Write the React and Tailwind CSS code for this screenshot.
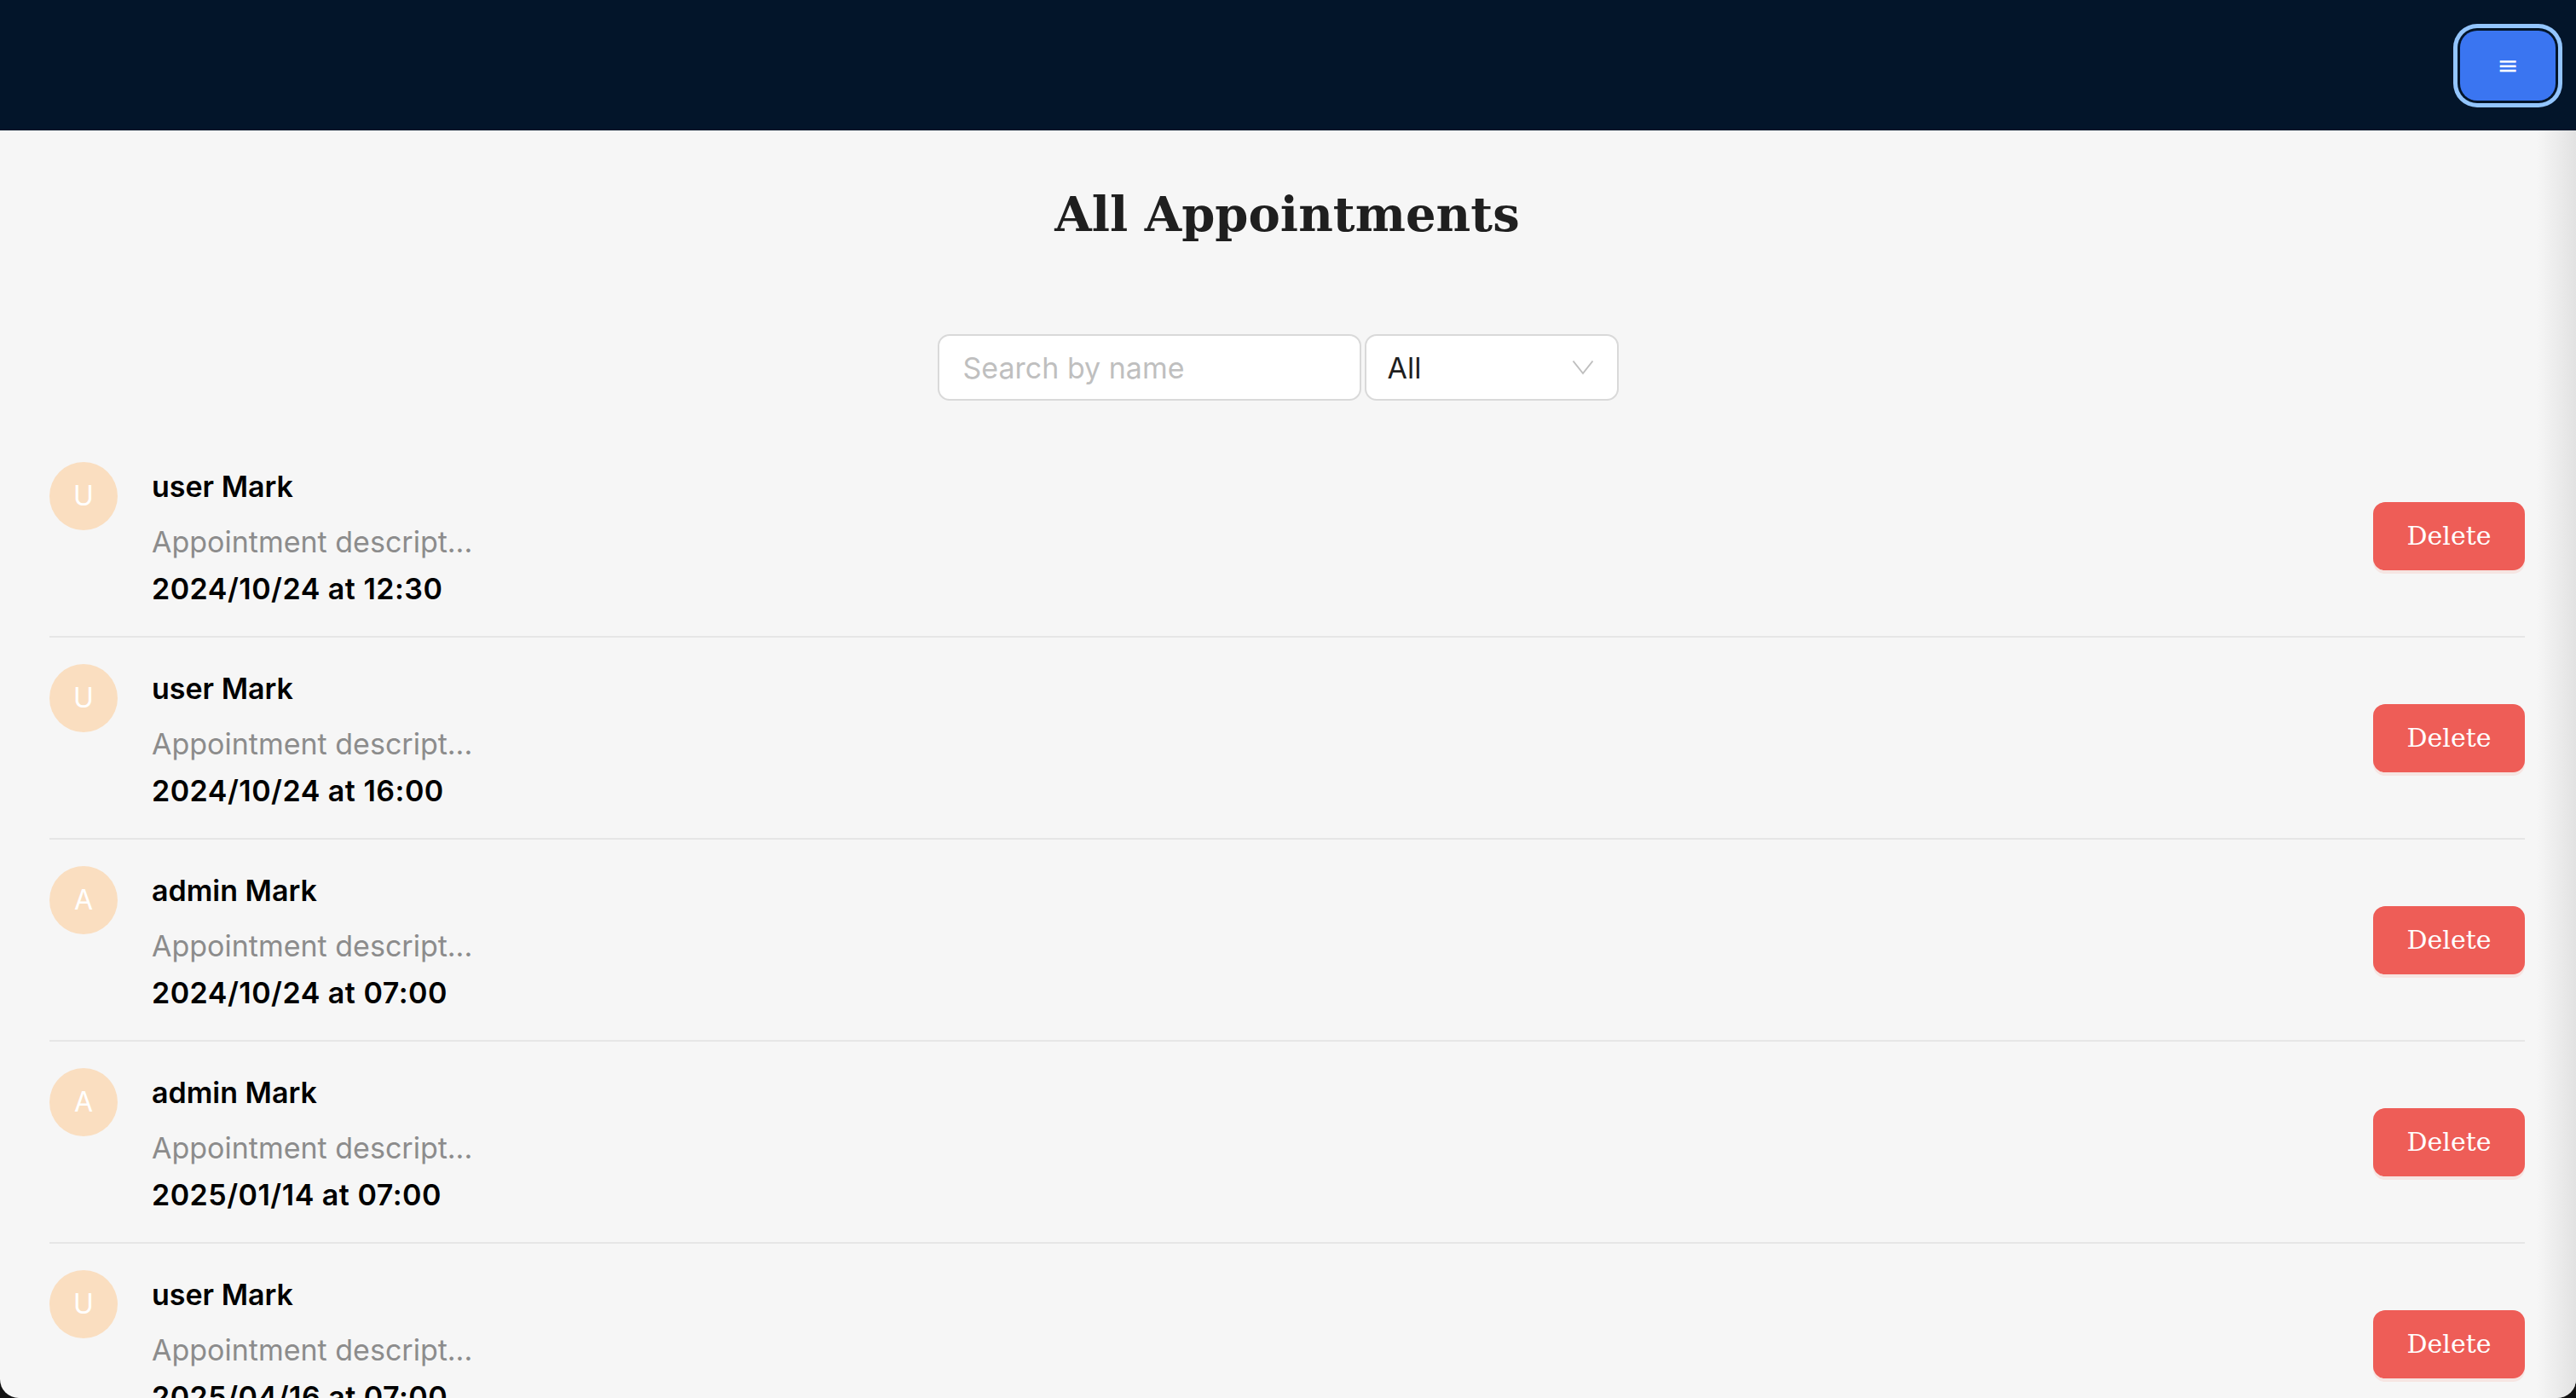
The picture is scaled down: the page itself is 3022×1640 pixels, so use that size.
import React from "react";

const rows = [
  { l: "U", name: "user Mark", date: "2024/10/24 at 12:30" },
  { l: "U", name: "user Mark", date: "2024/10/24 at 16:00" },
  { l: "A", name: "admin Mark", date: "2024/10/24 at 07:00" },
  { l: "A", name: "admin Mark", date: "2025/01/14 at 07:00" },
  { l: "U", name: "user Mark", date: "2025/04/16 at 07:00" },
  { l: "U", name: "user Mark", date: "2025/04/16 at 09:00" },
];

const sans = { fontFamily: "Inter, 'Noto Sans', sans-serif" };

export default function App() {
  return (
    <div className="h-[1640px] w-full overflow-hidden bg-[#111]">
      <div className="relative h-full w-full overflow-hidden rounded-b-[22px] bg-[#f6f6f6]">
        <header className="flex h-[153px] items-center justify-end bg-[#03152a] pr-[24px]">
          <button className="flex h-[82px] w-[112px] items-center justify-center rounded-[20px] bg-[#3a75f1] text-[30px] leading-none text-white ring-[5px] ring-[#93c5fd] ring-offset-[3px] ring-offset-[#03152a] [font-family:'DejaVu_Sans',sans-serif]">
            ≡
          </button>
        </header>

        <main className="px-[58px] pr-[60px] pt-[70px]" style={sans}>
          <h1 className="text-center text-[56px] font-bold leading-none text-[#1f1f1f] [font-family:'DejaVu_Serif',serif]">
            All Appointments
          </h1>

          <div className="mt-[113px] flex justify-center gap-[4px] pr-[22px]">
            <div className="flex h-[78px] w-[497px] items-center rounded-[14px] border-2 border-[#d9d9d9] bg-white pl-[28px] text-[34px] text-[#bfbfbf]">
              Search by name
            </div>
            <div className="flex h-[78px] w-[298px] items-center justify-between rounded-[14px] border-2 border-[#d9d9d9] bg-white pl-[25px] pr-[27px] text-[34px] text-[#1f1f1f]">
              <span>All</span>
              <svg width="26" height="18" viewBox="0 0 26 18" fill="none">
                <path d="M1.5 1.5 L13 16 L24.5 1.5" stroke="#bfbfbf" strokeWidth="2" />
              </svg>
            </div>
          </div>

          <ul className="mt-[41px]">
            {rows.map((r, i) => (
              <li
                key={i}
                className="flex items-center justify-between border-b-2 border-[#e6e6e6] pb-[31px] pt-[31px]"
              >
                <div className="flex items-start">
                  <div className="flex h-[80px] w-[80px] shrink-0 items-center justify-center rounded-full bg-[#fadec0] text-[32px] text-white">
                    {r.l}
                  </div>
                  <div className="ml-[40px] mt-[5px]">
                    <div className="text-[34px] font-semibold leading-[48px] text-black">{r.name}</div>
                    <div className="mt-[17px] text-[34px] leading-[48px] text-[#8c8c8c]">Appointment descript...</div>
                    <div className="mt-[7px] text-[34px] font-semibold leading-[48px] tracking-[0.5px] text-black">{r.date}</div>
                  </div>
                </div>
                <button className="h-[80px] w-[178px] rounded-[14px] bg-[#ee5d57] text-[30px] text-white shadow-[0_4px_0_rgba(255,38,5,0.08)] [font-family:'DejaVu_Serif',serif]">
                  Delete
                </button>
              </li>
            ))}
          </ul>
        </main>

        <div className="pointer-events-none absolute bottom-0 right-0 top-[153px] w-[46px] bg-gradient-to-r from-[#f6f6f6]/0 to-[#e2e2e2]" />
      </div>
    </div>
  );
}
